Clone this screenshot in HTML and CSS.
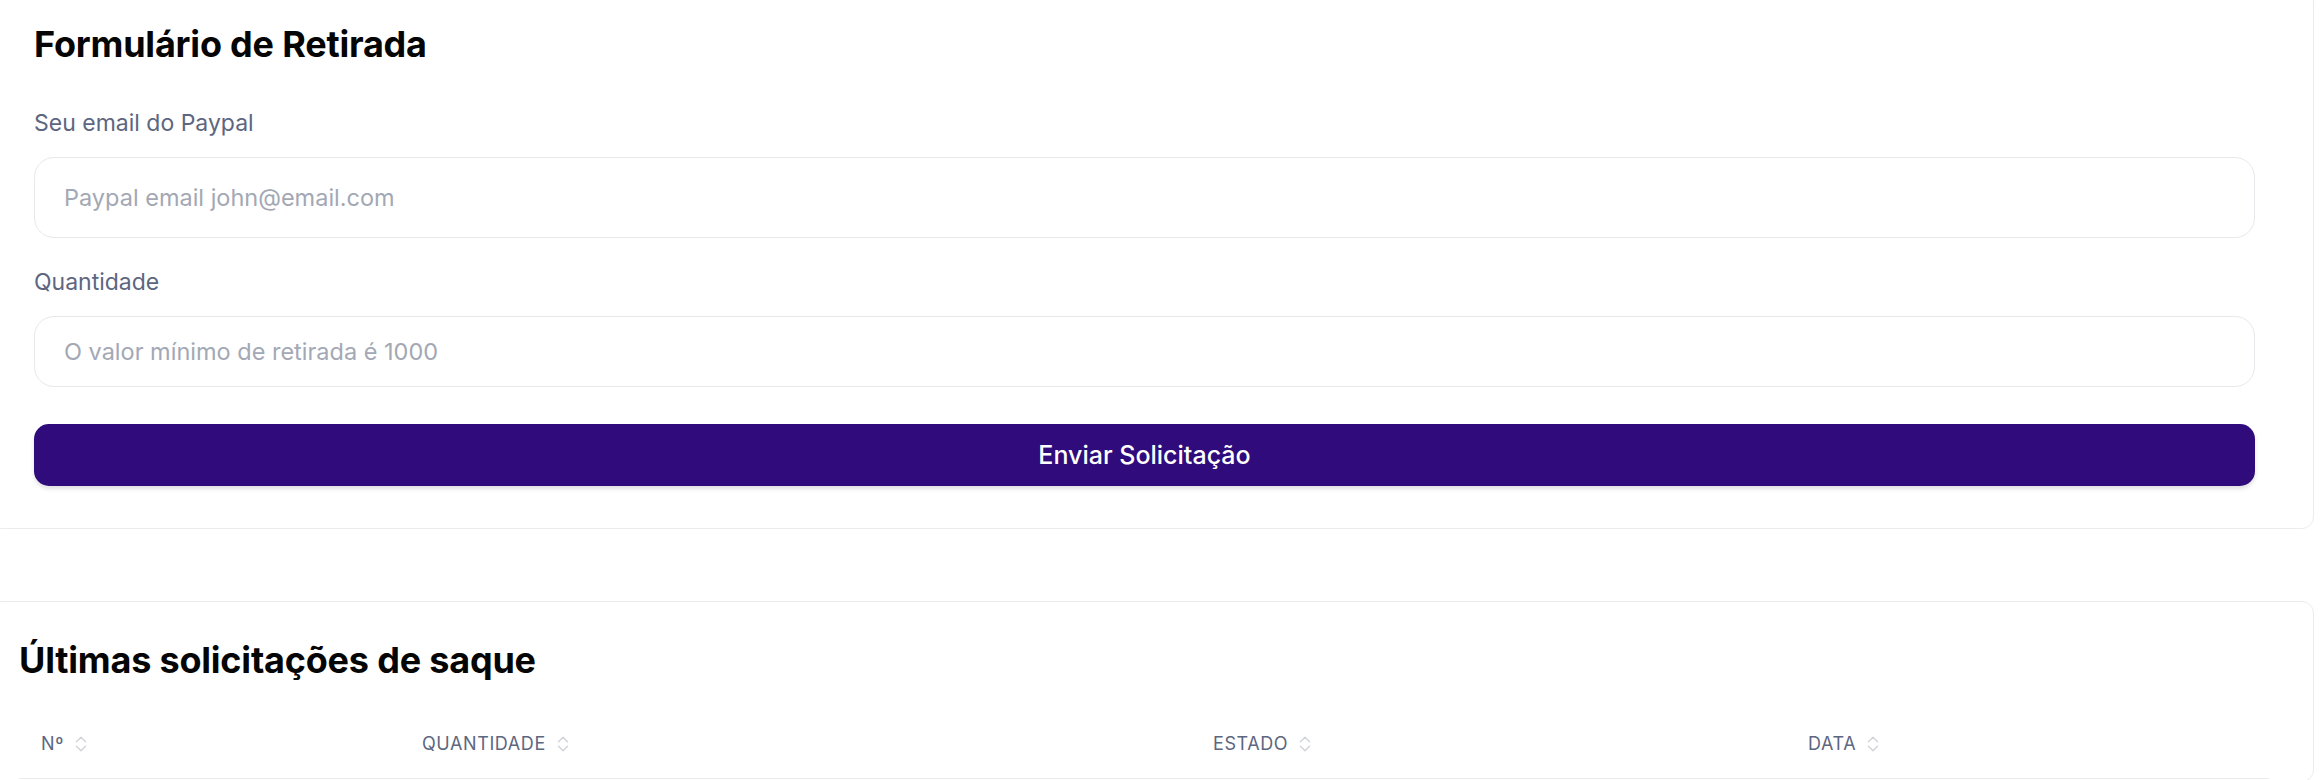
FILE: index.html
```html
<!DOCTYPE html>
<html lang="pt">
<head>
<meta charset="utf-8">
<title>Formulário de Retirada</title>
<link rel="stylesheet" href="styles.css">
</head>
<body>
<main class="page">
  <section class="card form-card">
    <h2 class="card-title">Formulário de Retirada</h2>
    <form class="form">
      <label class="field-label" for="email">Seu email do Paypal</label>
      <input class="field-input field-email" id="email" type="email" placeholder="Paypal email john@email.com">
      <label class="field-label label-qty" for="qty">Quantidade</label>
      <input class="field-input field-qty" id="qty" type="text" placeholder="O valor mínimo de retirada é 1000">
      <button class="submit" type="button">Enviar Solicitação</button>
    </form>
  </section>

  <section class="card table-card">
    <h2 class="card-title">Últimas solicitações de saque</h2>
    <div class="table">
      <div class="thead">
        <div class="th">Nº <svg class="sort" viewBox="0 0 10 16" aria-hidden="true"><path d="M1 6 L5 2 L9 6 M1 10 L5 14 L9 10" fill="none" stroke="currentColor" stroke-width="1.2" stroke-linecap="round" stroke-linejoin="round"/></svg></div>
        <div class="th">Quantidade <svg class="sort" viewBox="0 0 10 16" aria-hidden="true"><path d="M1 6 L5 2 L9 6 M1 10 L5 14 L9 10" fill="none" stroke="currentColor" stroke-width="1.2" stroke-linecap="round" stroke-linejoin="round"/></svg></div>
        <div class="th">Estado <svg class="sort" viewBox="0 0 10 16" aria-hidden="true"><path d="M1 6 L5 2 L9 6 M1 10 L5 14 L9 10" fill="none" stroke="currentColor" stroke-width="1.2" stroke-linecap="round" stroke-linejoin="round"/></svg></div>
        <div class="th">Data <svg class="sort" viewBox="0 0 10 16" aria-hidden="true"><path d="M1 6 L5 2 L9 6 M1 10 L5 14 L9 10" fill="none" stroke="currentColor" stroke-width="1.2" stroke-linecap="round" stroke-linejoin="round"/></svg></div>
      </div>
    </div>
  </section>
</main>
</body>
</html>
```

FILE: styles.css
```css
* { box-sizing: border-box; }

html, body {
  margin: 0;
  padding: 0;
  background: #ffffff;
  overflow: hidden;
}

body {
  font-family: Inter, "Noto Sans", "Liberation Sans", sans-serif;
  color: #111111;
  width: 2324px;
  height: 780px;
}

.page {
  display: flex;
  flex-direction: column;
  gap: 72px;
  margin-left: -10px;
  margin-top: -10px;
  width: 2324px;
}

.card {
  background: #ffffff;
  border: 1px solid #ececef;
  border-radius: 12px;
}

.card-title {
  margin: 0;
  font-size: 36px;
  line-height: 40px;
  font-weight: 700;
  color: #050505;
  letter-spacing: -0.2px;
}

/* ---------- form card ---------- */
.form-card {
  padding: 33px 58px 42px 43px;
}

.form {
  display: flex;
  flex-direction: column;
  margin-top: 44px;
}

.field-label {
  font-size: 23px;
  line-height: 30px;
  color: #5d6680;
  margin-bottom: 19px;
}

.label-qty {
  margin-top: 29px;
}

.field-input {
  width: 100%;
  border: 1.5px solid #e8e8ec;
  border-radius: 20px;
  background: #ffffff;
  font-family: inherit;
  font-size: 23.5px;
  color: #111;
  padding: 0 29px;
  outline: none;
}

.field-input::placeholder {
  color: #a3a8b4;
}

.field-email { height: 81px; }
.field-qty { height: 71px; }

.submit {
  margin-top: 37px;
  height: 62px;
  width: 100%;
  border: none;
  border-radius: 15px;
  background: #2f0b7b;
  color: #ffffff;
  font-family: inherit;
  font-size: 25px;
  font-weight: 500;
  box-shadow: 0 3px 4px rgba(0, 0, 0, 0.12);
  cursor: pointer;
}

/* ---------- table card ---------- */
.table-card {
  padding: 38px 44px 2px 28px;
}

.table {
  margin-top: 30px;
}

.thead {
  display: grid;
  grid-template-columns: 381px 791px 595px 1fr;
  border-bottom: 1.5px solid #ececef;
}

.th {
  display: flex;
  align-items: center;
  gap: 11px;
  padding: 22px 22px 22px;
  font-size: 18px;
  line-height: 24px;
  font-weight: 400;
  text-transform: uppercase;
  letter-spacing: 0.6px;
  color: #5d6680;
}

.sort {
  width: 12px;
  height: 18px;
  color: #cfd2d8;
  flex: none;
}
```
